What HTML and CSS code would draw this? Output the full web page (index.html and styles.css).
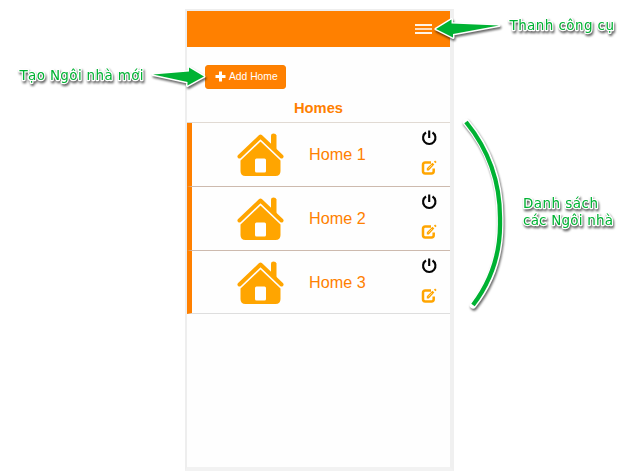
FILE: index.html
```html
<!DOCTYPE html>
<html lang="vi">
<head>
<meta charset="utf-8">
<title>Homes</title>
<link rel="stylesheet" href="styles.css">
</head>
<body>
<svg class="symbols" width="0" height="0">
  <symbol id="house" viewBox="0 0 48 44">
    <path d="M34 12V2.500Q34 .5 36.500 .5T39.500 2.500V17L34 13Z" fill="#ffa500"/>
    <path d="M2.500 23.500 23.500 3.500 44.500 23.500" fill="none" stroke="#ffa500" stroke-width="4" stroke-linecap="round" stroke-linejoin="round"/>
    <path fill-rule="evenodd" d="M23.500 8.500 43.500 27.500V38Q43.500 43 38.500 43H8.500Q3.500 43 3.500 38V27.500ZM19.500 25.500Q18 25.500 18 27V38Q18 39.500 19.500 39.500H27.500Q29 39.500 29 38V27Q29 25.500 27.500 25.500Z" fill="#ffa500"/>
  </symbol>
  <symbol id="power" viewBox="0 0 16 16">
    <path d="M5 2.500A6.200 6.200 0 1 0 11.500 2.500M8.200 .5V8" fill="none" stroke="#050505" stroke-width="2.100"/>
  </symbol>
  <symbol id="edit" viewBox="0 0 16 16">
    <path d="M10 2.500H4.200Q2 2.500 2 4.700V11.300Q2 13.500 4.200 13.500H10.500Q12.700 13.500 12.700 11.300V8.500" fill="none" stroke="#ffa500" stroke-width="2.500"/>
    <path d="M5.800 10.400V8.300L11.500 2.800 13.300 4.600 7.800 10.400Z" fill="#ffa500"/>
    <path d="M13.500 1.200 15 2.700" stroke="#ffa500" stroke-width="1.800"/>
    <path d="M7.500 8.500 11 5" stroke="#fff" stroke-width=".5"/>
  </symbol>
</svg>
<main class="phone">
  <header class="topbar">
    <div class="menu"><span></span><span></span><span></span></div>
  </header>
  <button class="add"><svg width="11" height="11" viewBox="0 0 11 11"><path d="M5.500 .5V10.500M.5 5.500H10.500" stroke="#fff" stroke-width="3"/></svg><span>Add Home</span></button>
  <h1 class="title">Homes</h1>
  <section class="list">
    <article class="row"><svg class="house"><use href="#house"/></svg><span class="name">Home 1</span><div class="actions"><svg><use href="#power"/></svg><svg><use href="#edit"/></svg></div></article>
    <article class="row"><svg class="house"><use href="#house"/></svg><span class="name">Home 2</span><div class="actions"><svg><use href="#power"/></svg><svg><use href="#edit"/></svg></div></article>
    <article class="row"><svg class="house"><use href="#house"/></svg><span class="name">Home 3</span><div class="actions"><svg><use href="#power"/></svg><svg><use href="#edit"/></svg></div></article>
  </section>
</main>
<svg class="notes" width="640" height="475" viewBox="0 0 640 475">
  <g class="shape">
    <path d="M436 29 451.500 19.500 451.500 23.500 499 25.500 453 34 453 37.500Z"/>
    <path d="M204 76.500 189 67.500 189 71.500 153 74.500 187.500 82 187.500 85.500Z"/>
  </g>
  <g class="arc">
    <path class="halo" d="M466 122Q501 163 500 221 501 270 473 305"/>
    <path class="line" d="M466 122Q501 165 500 221 501 268 473 305"/>
  </g>
  <g class="label">
    <text x="509.500" y="30" textLength="104.500">Thanh công cụ</text>
    <text x="19.500" y="80" textLength="124">Tạo Ngôi nhà mới</text>
    <text x="523" y="208" textLength="75">Danh sách</text>
    <text x="523" y="225" textLength="90">các Ngôi nhà</text>
  </g>
</svg>
</body>
</html>
```
FILE: styles.css
```css
* { box-sizing: border-box; }
body {
  margin: 0;
  padding: 9px 0 0 185px;
  height: 475px;
  overflow: hidden;
  background: #fff;
  font-family: "Liberation Sans", Arial, sans-serif;
}
.symbols { position: absolute; }
.phone {
  width: 269px;
  height: 462px;
  border: 2px solid #eee;
  border-right: 4px solid #f0f0f0;
  border-bottom: 4px solid #f2f2f2;
  background: #fefefe;
}
.topbar {
  height: 36px;
  padding: 13px 18px 0 0;
  display: flex;
  justify-content: flex-end;
  background: #ff8000;
}
.menu {
  display: flex;
  flex-direction: column;
  justify-content: space-between;
  width: 17px;
  height: 10px;
}
.menu span { height: 2px; background: #fff3e6; }
.menu span:nth-child(2) { background: #ffdcb8; }
.add {
  display: flex;
  align-items: center;
  gap: 3px;
  width: 80.500px;
  height: 24px;
  margin: 18px 0 0 18px;
  padding: 0 0 1px 9px;
  border: 1px solid #f98000;
  border-radius: 3px;
  background: #ff8000;
  color: #fff;
  font: 10.300px "Liberation Sans", Arial, sans-serif;
  white-space: nowrap;
}
.title {
  margin: 9px 0 0;
  height: 24px;
  color: #ff8000;
  font-size: 14.700px;
  line-height: 20px;
  text-align: center;
}
.list { border-top: 1px solid #e1dad3; }
.row {
  display: flex;
  height: 64px;
  border-left: 5px solid #ff8000;
  border-bottom: 1px solid #cdbaae;
}
.row:last-child { height: 63px; border-bottom-color: #dedede; }
.house { width: 48px; height: 44px; margin: 10px 0 0 45px; }
.name {
  width: 112px;
  margin-left: 24px;
  color: #ff8000;
  font-size: 16.200px;
  line-height: 62px;
}
.actions {
  display: flex;
  flex-direction: column;
  gap: 14px;
  padding-top: 6.500px;
}
.actions svg { width: 16px; height: 16px; }
.notes { position: absolute; left: 0; top: 0; }
.shape, .arc, .label { filter: drop-shadow(1.500px 2px 1px #0009); }
.shape path { fill: #00b233; stroke: #fff; stroke-width: 3px; paint-order: stroke; stroke-linejoin: round; }
.arc path { fill: none; }
.halo { stroke: #fff; stroke-width: 7px; stroke-linecap: round; }
.line { stroke: #00b233; stroke-width: 4.300px; }
.label text {
  font: 13.500px "DejaVu Sans", Verdana, sans-serif;
  fill: #00b233;
  stroke: #fff;
  stroke-width: 2.500px;
  stroke-linejoin: round;
  paint-order: stroke;
}
```
